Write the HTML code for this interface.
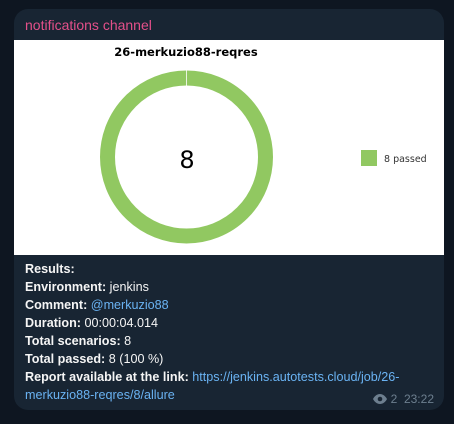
<!DOCTYPE html><html><head><style>
body{margin:0;width:454px;height:424px;background:#0e1621;font-family:"Liberation Sans","DejaVu Sans",sans-serif;position:relative;overflow:hidden}
.top{position:absolute;left:240px;top:-8px;width:62px;height:8px;background:#1e2c3a;border-radius:4px}
.b{position:absolute;left:14px;top:9px;width:430px;height:401px;background:#182533;border-radius:14px;overflow:hidden}
.n{position:absolute;left:11px;top:8px;color:#e4508a;font-size:14px}
.img{position:absolute;left:0;top:31px;width:430px;height:215px;background:#fff}
.t{position:absolute;left:11px;top:251px;color:#f5f5f5;font-size:12.6px;line-height:18px;width:420px}
.t b{font-weight:bold}
a{color:#6ab3f3;text-decoration:none}
.m{position:absolute;right:10px;bottom:4px;color:#6d7f8f;font-size:12px}
</style></head><body><div class="top"></div>
<div class="b"><div class="n">notifications channel</div>
<div class="img"><svg width="430" height="215">
<text x="172" y="16" text-anchor="middle" font-family="DejaVu Sans" font-weight="bold" font-size="11.5">26-merkuzio88-reqres</text>
<circle cx="172.5" cy="117" r="79" fill="none" stroke="#91c861" stroke-width="15"/>
<line x1="172.5" y1="30" x2="172.5" y2="46" stroke="#fff" stroke-width="0.8"/>
<text x="173" y="128" text-anchor="middle" font-family="DejaVu Sans" font-size="24">8</text>
<rect x="347" y="110" width="16" height="16" fill="#91c861"/>
<text x="370" y="122" font-family="DejaVu Sans" font-size="9.5" fill="#333">8 passed</text>
</svg></div>
<div class="t"><b>Results:</b><br><b>Environment:</b> jenkins<br><b>Comment:</b> <a>@merkuzio88</a><br><b>Duration:</b> 00:00:04.014<br><b>Total scenarios:</b> 8<br><b>Total passed:</b> 8 (100 %)<br><b>Report available at the link:</b> <a>https://jenkins.autotests.cloud/job/26-<br>merkuzio88-reqres/8/allure</a></div>
<div class="m"><svg width="14" height="10" viewBox="0 0 14 10" style="vertical-align:-1px"><path d="M7 0C3.5 0 1 3 0 5c1 2 3.5 5 7 5s6-3 7-5c-1-2-3.5-5-7-5z" fill="#6d7f8f"/><circle cx="7" cy="5" r="2.3" fill="#182533"/></svg> 2&nbsp;&nbsp;23:22</div>
</div></body></html>
